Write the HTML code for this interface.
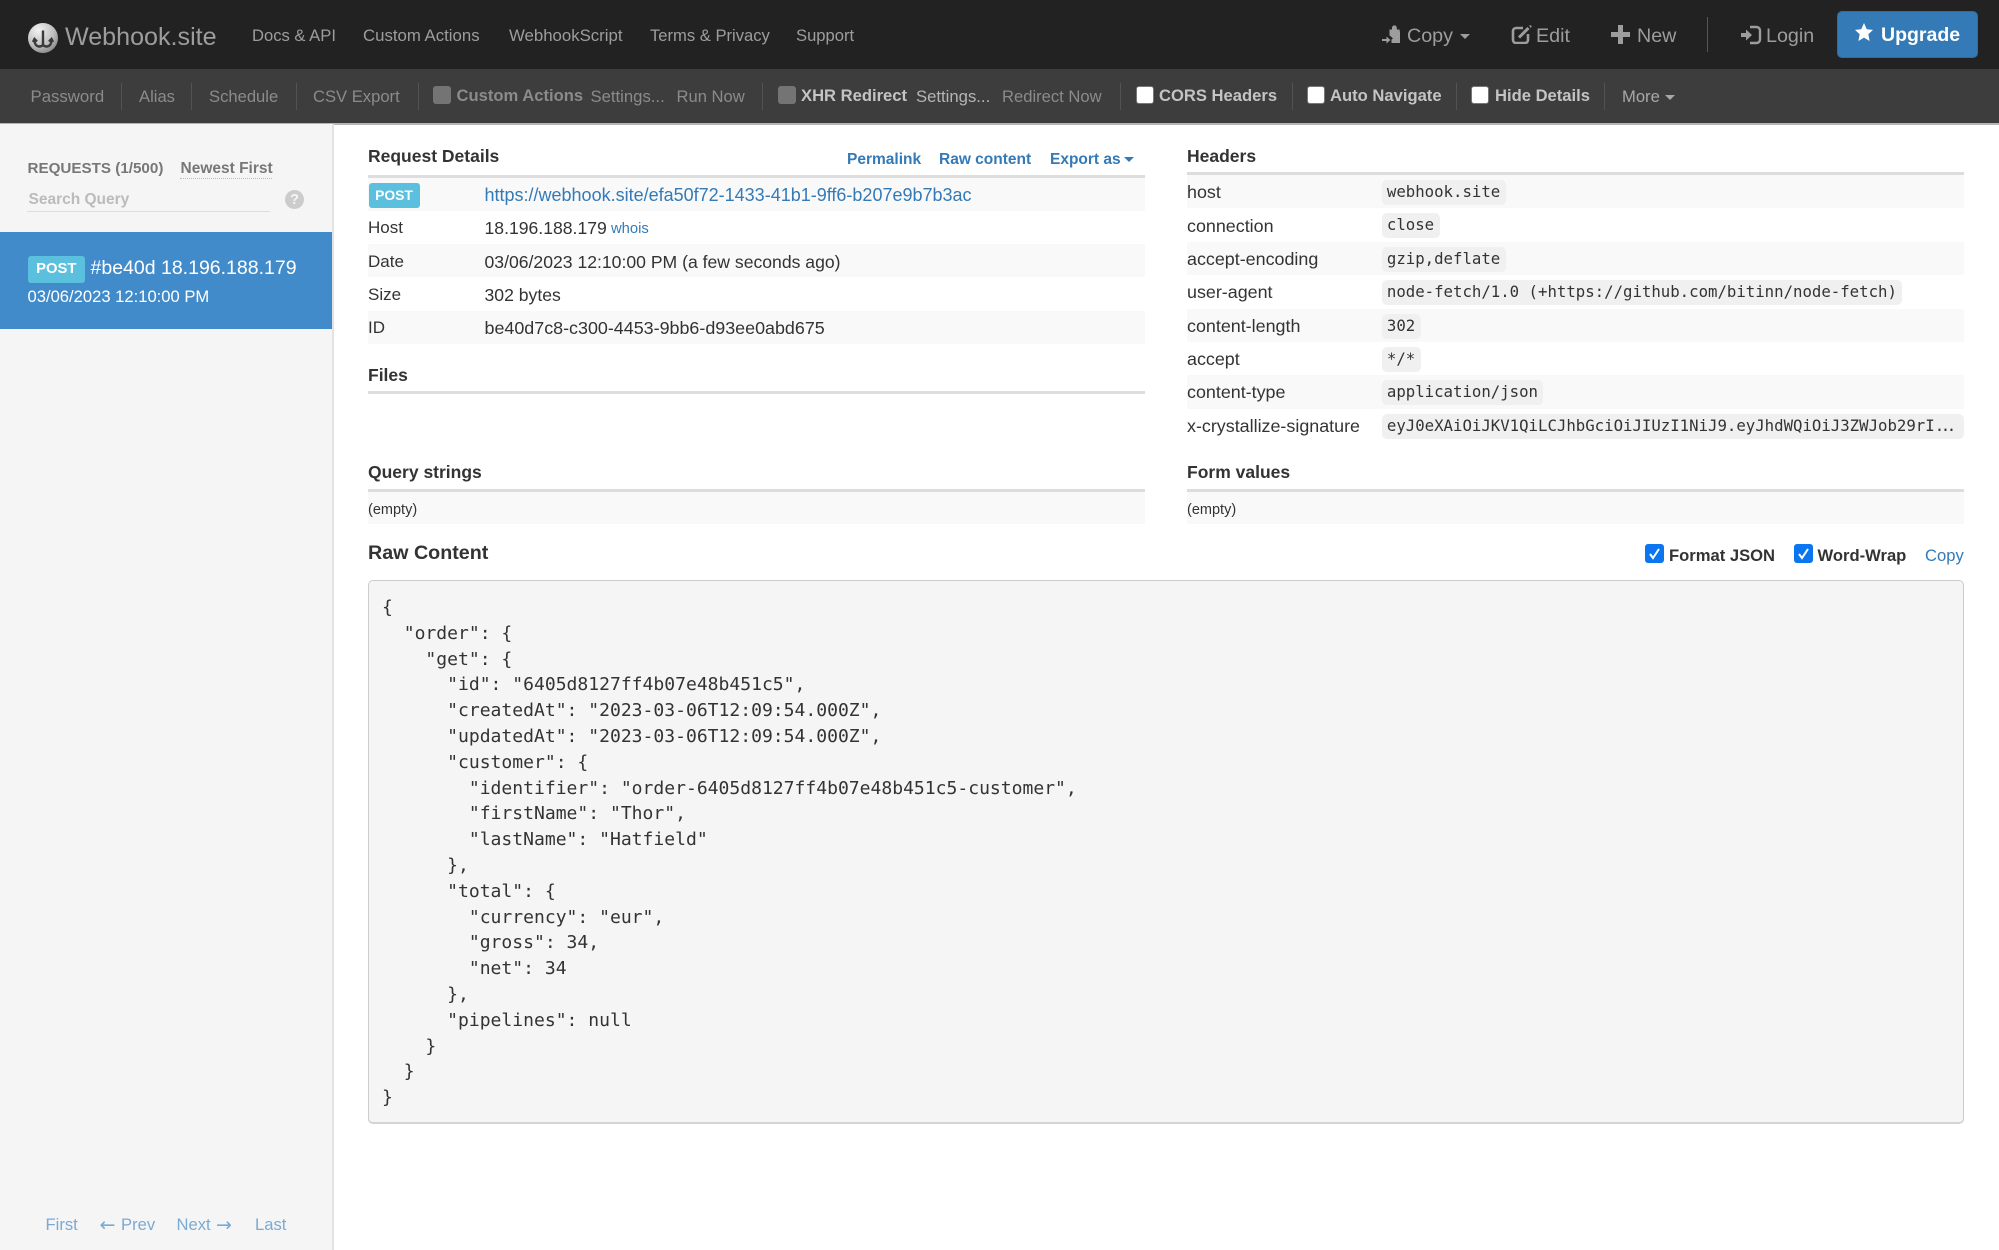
<!DOCTYPE html>
<html lang="en"><head><meta charset="utf-8"><title>Webhook.site</title>
<style>
html,body{margin:0;padding:0;background:#fff}
#p{position:relative;width:1999px;height:1250px;overflow:hidden;background:#fff;font-family:"Liberation Sans",Arial,sans-serif;font-size:16.6px;color:#333}
#p div,#p span.t,#p a,#p svg{position:absolute}
.t{white-space:nowrap;line-height:20px;height:20px}
a{text-decoration:none;color:#337ab7}
.b{font-weight:bold}
.n{color:#9d9d9d;font-size:16.8px}
.s{color:#8b8b8b}
.e{color:#c4c4c4;font-weight:bold}
.d{color:#8b8b8b;font-weight:bold}
.sep{width:1px;top:83px;height:27px;background:#535353}
.cb{width:18px;height:18px;top:86px;border-radius:3px}
.row{height:33.3px}
.rule{height:3px;background:#ddd}
.h{font-weight:bold;font-size:17.5px;color:#333}
.v{font-size:17.6px}
.k{font-size:17.9px}
.code{font-family:"DejaVu Sans Mono","Liberation Mono",monospace;font-size:15.7px;background:#f0f0f0;border-radius:5px;height:25px;line-height:24px;white-space:nowrap;padding:0 5.4px;color:#333;box-sizing:border-box}
.lab{background:#5bc0de;color:#fff;font-weight:bold;border-radius:3px;text-align:center;white-space:nowrap}
.caret{width:0;height:0;border-left:5px solid transparent;border-right:5px solid transparent;border-top:5px solid #9d9d9d}
.blue{width:19px;height:19px;background:#0b76ef;border-radius:3px;top:544px}
#raw{left:368px;top:580px;width:1596px;height:544px;box-sizing:border-box;background:#f5f5f5;border:1px solid #ccc;border-bottom:2px solid #d4d4d4;border-radius:5px}
pre{position:absolute;left:382px;top:595px;margin:0;font-family:"DejaVu Sans Mono","Liberation Mono",monospace;font-size:18.05px;line-height:25.8px;color:#333}
.pg{color:#7aaad4}
.ar{font-family:"DejaVu Sans",sans-serif;font-size:19px}
</style></head><body>
<div id="p">
<div style="left:0;top:0;width:1999px;height:69px;background:#222"></div>
<div style="left:0;top:69px;width:1999px;height:54px;background:#3d3d3d"></div>
<div style="left:0;top:123px;width:1999px;height:1.5px;background:#b5b5b5"></div>

<svg style="left:28px;top:23px" width="30" height="30" viewBox="0 0 30 30"><defs><radialGradient id="g" cx=".35" cy=".25" r=".95"><stop offset="0" stop-color="#f2f2f2"/><stop offset=".55" stop-color="#bdbdbd"/><stop offset="1" stop-color="#6d6d6d"/></radialGradient></defs><circle cx="15" cy="15" r="15" fill="url(#g)"/><path d="M15 7.5V22M6.5 17c0 4 2 6.5 5 6.5 2 0 3-1 3.5-1.5.5.5 1.5 1.500 3.500 1.500 3 0 5-2.500 5-6.500M5 19l1.500-3 2.500 2.500M25 19l-1.500-3-2.500 2.500" fill="none" stroke="#3a3a3a" stroke-width="2.400"/></svg>
<span class="t" style="left:65px;top:24.500px;font-size:25.100px;line-height:24px;height:24px;color:#9d9d9d">Webhook.site</span>
<a class="t n" style="left:252px;top:25.500px;font-size:16.600px">Docs &amp; API</a>
<a class="t n" style="left:363px;top:25.500px">Custom Actions</a>
<a class="t n" style="left:509px;top:25.500px">WebhookScript</a>
<a class="t n" style="left:650px;top:25.500px;font-size:16.600px">Terms &amp; Privacy</a>
<a class="t n" style="left:796px;top:25.500px;font-size:16.600px">Support</a>

<svg style="left:1382px;top:25px" width="20" height="21" viewBox="0 0 20 21" fill="#9d9d9d"><path d="M7.500 4.500H10V2.800a2.400 2.400 0 0 1 4.800 0V4.500h2.700l.5 3V18H9.500v-3.500l1.500-1-1.500-1.500-2-1.500z"/><path d="M0 14h4.500v-2.500l4 3.500-4 3.500V16H0z"/></svg>
<span class="t n" style="left:1407px;top:26px;font-size:19.700px">Copy</span>
<div class="caret" style="left:1460px;top:34px"></div>
<svg style="left:1511px;top:25px" width="21" height="19" viewBox="0 0 21 19" fill="none"><path d="M12 3H5a3 3 0 0 0-3 3v9a3 3 0 0 0 3 3h9a3 3 0 0 0 3-3V9" stroke="#9d9d9d" stroke-width="2.600"/><path d="M8 12.500L17.500 3" stroke="#9d9d9d" stroke-width="3"/><path d="M18 0l3 1-1.500 2z" fill="#9d9d9d"/></svg>
<span class="t n" style="left:1536px;top:26px;font-size:19.700px">Edit</span>
<svg style="left:1611px;top:25px" width="19" height="19" viewBox="0 0 19 19" fill="#9d9d9d"><path d="M7 0h5v7h7v5h-7v7H7v-7H0V7h7z"/></svg>
<span class="t n" style="left:1637px;top:26px;font-size:19.700px">New</span>
<div style="left:1707px;top:17px;width:1px;height:35px;background:#555"></div>
<svg style="left:1741px;top:25px" width="21" height="20" viewBox="0 0 21 20" fill="none"><path d="M0 8h5V4.500L11 10l-6 5.500V12H0z" fill="#9d9d9d"/><path d="M9 2h6.500a3.500 3.500 0 0 1 3.500 3.500v9a3.500 3.500 0 0 1-3.500 3.500H9" stroke="#9d9d9d" stroke-width="2.400"/></svg>
<span class="t n" style="left:1766px;top:26px;font-size:19.700px">Login</span>
<div style="left:1837px;top:11px;width:141px;height:47px;background:#337ab7;border-radius:5px;border:1px solid #2e6da4;box-sizing:border-box"></div>
<svg style="left:1855px;top:23px" width="18" height="18" viewBox="0 0 24 24" fill="#fff"><path d="M12 0l3.700 8.300 8.300.9-6.200 5.800 1.700 9L12 19.500 4.500 24l1.700-9L0 9.200l8.300-.9z"/></svg>
<span class="t b" style="left:1881px;top:25px;font-size:19.500px;color:#fff">Upgrade</span>

<a class="t s" style="left:30.500px;top:87px;font-size:16.800px">Password</a><div class="sep" style="left:121px"></div>
<a class="t s" style="left:139px;top:87px">Alias</a><div class="sep" style="left:191px"></div>
<a class="t s" style="left:209px;top:87px">Schedule</a><div class="sep" style="left:296px"></div>
<a class="t s" style="left:313px;top:87px">CSV Export</a><div class="sep" style="left:418px"></div>
<div class="cb" style="left:433px;background:#747474"></div>
<span class="t d" style="left:456.500px;top:85.500px">Custom Actions</span>
<a class="t s" style="left:590.500px;top:87px;font-size:16.700px">Settings...</a>
<a class="t s" style="left:676.500px;top:87px">Run Now</a><div class="sep" style="left:762px"></div>
<div class="cb" style="left:778px;background:#747474"></div>
<span class="t e" style="left:801px;top:85.500px">XHR Redirect</span>
<a class="t" style="left:916px;top:87px;color:#b5b5b5;font-size:16.700px">Settings...</a>
<a class="t s" style="left:1002px;top:87px">Redirect Now</a><div class="sep" style="left:1120px"></div>
<div class="cb" style="left:1135.500px;background:#fff;box-sizing:border-box;border:1px solid #777"></div>
<span class="t e" style="left:1159px;top:85.500px">CORS Headers</span><div class="sep" style="left:1292px"></div>
<div class="cb" style="left:1307px;background:#fff;box-sizing:border-box;border:1px solid #777"></div>
<span class="t e" style="left:1330px;top:85.500px">Auto Navigate</span><div class="sep" style="left:1456px"></div>
<div class="cb" style="left:1471px;background:#fff;box-sizing:border-box;border:1px solid #777"></div>
<span class="t e" style="left:1495px;top:85.500px">Hide Details</span><div class="sep" style="left:1604px"></div>
<a class="t" style="left:1622px;top:87px;color:#a8a8a8">More</a>
<div class="caret" style="left:1665px;top:95px;border-top-color:#a8a8a8"></div>

<div style="left:0;top:124px;width:332px;height:1126px;background:#f5f5f5"></div>
<div style="left:332px;top:124px;width:1.500px;height:1126px;background:#e2e2e2"></div>
<span class="t b" style="left:27.500px;top:158.500px;font-size:15.200px;color:#777">REQUESTS (1/500)</span>
<span class="t b" style="left:180.500px;top:159px;font-size:15.500px;color:#777;height:20px">Newest First</span>
<div style="left:180px;top:177.500px;width:92px;border-top:1px dotted #bbb;height:0"></div>
<span class="t b" style="left:28.500px;top:189.500px;font-size:15.500px;color:#bbb">Search Query</span>
<div style="left:27px;top:210.500px;width:243px;height:1px;background:#ddd"></div>
<div style="left:285px;top:190px;width:19px;height:19px;border-radius:50%;background:#ccc"></div>
<span class="t b" style="left:285px;top:189.500px;width:19px;text-align:center;font-size:14.500px;color:#f5f5f5">?</span>

<div style="left:0;top:231.500px;width:332px;height:97.500px;background:#428bca"></div>
<div class="lab" style="left:27.500px;top:256px;width:57.500px;height:27px;line-height:27px;font-size:14.800px">POST</div>
<span class="t" style="left:90.500px;top:258px;font-size:19.500px;color:#fff">#be40d 18.196.188.179</span>
<span class="t" style="left:27.500px;top:286.500px;color:#fff">03/06/2023 12:10:00 PM</span>

<span class="t h" style="left:368px;top:145.500px">Request Details</span>
<a class="t b" style="left:847px;top:149.500px;font-size:15.500px">Permalink</a>
<a class="t b" style="left:939px;top:149.500px;font-size:15.500px">Raw content</a>
<a class="t b" style="left:1050px;top:149.500px;font-size:15.500px">Export as</a>
<div class="caret" style="left:1124px;top:157px;border-top-color:#337ab7"></div>
<div class="rule" style="left:368px;top:174.500px;width:777px"></div>
<div class="row" style="left:368px;top:177.500px;width:777px;background:#f9f9f9"></div>
<div class="row" style="left:368px;top:244px;width:777px;background:#f9f9f9"></div>
<div class="row" style="left:368px;top:310.700px;width:777px;background:#f9f9f9"></div>
<div class="lab" style="left:368.500px;top:183px;width:51px;height:25px;line-height:25px;font-size:13.900px">POST</div>
<a class="t" style="left:484.500px;top:184.500px;font-size:18px">https://webhook.site/efa50f72-1433-41b1-9ff6-b207e9b7b3ac</a>
<span class="t" style="left:368px;top:218px;font-size:17px">Host</span>
<span class="t v" style="left:484.500px;top:218px">18.196.188.179</span>
<a class="t" style="left:611px;top:219px;font-size:14.800px">whois</a>
<span class="t" style="left:368px;top:251.500px;font-size:17px">Date</span>
<span class="t v" style="left:484.500px;top:251.500px">03/06/2023 12:10:00 PM (a few seconds ago)</span>
<span class="t" style="left:368px;top:285px;font-size:17px">Size</span>
<span class="t v" style="left:484.500px;top:285px">302 bytes</span>
<span class="t" style="left:368px;top:318px;font-size:17px">ID</span>
<span class="t" style="left:484.500px;top:318px;font-size:17.900px">be40d7c8-c300-4453-9bb6-d93ee0abd675</span>

<span class="t h" style="left:368px;top:365px">Files</span>
<div class="rule" style="left:368px;top:391px;width:777px"></div>
<span class="t h" style="left:368px;top:461.500px">Query strings</span>
<div class="rule" style="left:368px;top:489px;width:777px"></div>
<div style="left:368px;top:492px;width:777px;height:32px;background:#f9f9f9"></div>
<span class="t" style="left:368px;top:499.500px;font-size:14.500px">(empty)</span>

<span class="t h" style="left:1187px;top:145.500px">Headers</span>
<div class="rule" style="left:1187px;top:172px;width:777px"></div>
<div class="row" style="left:1187px;top:175px;width:777px;background:#f9f9f9"></div>
<div class="row" style="left:1187px;top:241.800px;width:777px;background:#f9f9f9"></div>
<div class="row" style="left:1187px;top:308.600px;width:777px;background:#f9f9f9"></div>
<div class="row" style="left:1187px;top:375.400px;width:777px;background:#f9f9f9"></div>

<span class="t k" style="left:1187px;top:182px">host</span><div class="code" style="left:1381.500px;top:180px">webhook.site</div>
<span class="t k" style="left:1187px;top:215.500px">connection</span><div class="code" style="left:1381.500px;top:213.400px">close</div>
<span class="t k" style="left:1187px;top:248.500px">accept-encoding</span><div class="code" style="left:1381.500px;top:246.800px">gzip,deflate</div>
<span class="t k" style="left:1187px;top:282px">user-agent</span><div class="code" style="left:1381.500px;top:280.200px">node-fetch/1.0 (+https://github.com/bitinn/node-fetch)</div>
<span class="t k" style="left:1187px;top:315.500px">content-length</span><div class="code" style="left:1381.500px;top:313.600px">302</div>
<span class="t k" style="left:1187px;top:349px">accept</span><div class="code" style="left:1381.500px;top:347px">*/*</div>
<span class="t k" style="left:1187px;top:382px">content-type</span><div class="code" style="left:1381.500px;top:380.400px">application/json</div>
<span class="t k" style="left:1187px;top:415.500px">x-crystallize-signature</span><div class="code" style="left:1381.500px;top:413.800px;width:582.500px">eyJ0eXAiOiJKV1QiLCJhbGciOiJIUzI1NiJ9.eyJhdWQiOiJ3ZWJob29rI<span style="letter-spacing:-3.400px">...</span></div>

<span class="t h" style="left:1187px;top:461.500px">Form values</span>
<div class="rule" style="left:1187px;top:489px;width:777px"></div>
<div style="left:1187px;top:492px;width:777px;height:32px;background:#f9f9f9"></div>
<span class="t" style="left:1187px;top:499.500px;font-size:14.500px">(empty)</span>

<span class="t b" style="left:368px;top:542.500px;font-size:19.700px;color:#333">Raw Content</span>
<div class="blue" style="left:1645px"></div>
<svg style="left:1645px;top:544px" width="19" height="19" viewBox="0 0 19 19"><path d="M5 10l3 4 6-9" fill="none" stroke="#fff" stroke-width="2"/></svg>
<span class="t b" style="left:1669px;top:545.500px">Format JSON</span>
<div class="blue" style="left:1793.500px"></div>
<svg style="left:1793.500px;top:544px" width="19" height="19" viewBox="0 0 19 19"><path d="M5 10l3 4 6-9" fill="none" stroke="#fff" stroke-width="2"/></svg>
<span class="t b" style="left:1817.500px;top:545.500px">Word-Wrap</span>
<a class="t" style="left:1925px;top:545.500px">Copy</a>

<div id="raw"></div>
<pre>{
  "order": {
    "get": {
      "id": "6405d8127ff4b07e48b451c5",
      "createdAt": "2023-03-06T12:09:54.000Z",
      "updatedAt": "2023-03-06T12:09:54.000Z",
      "customer": {
        "identifier": "order-6405d8127ff4b07e48b451c5-customer",
        "firstName": "Thor",
        "lastName": "Hatfield"
      },
      "total": {
        "currency": "eur",
        "gross": 34,
        "net": 34
      },
      "pipelines": null
    }
  }
}</pre>

<a class="t pg" style="left:45.500px;top:1215px">First</a>
<span class="t pg ar" style="left:99.500px;top:1215px">←</span>
<a class="t pg" style="left:121px;top:1215px">Prev</a>
<a class="t pg" style="left:176.500px;top:1215px">Next</a>
<span class="t pg ar" style="left:216px;top:1215px">→</span>
<a class="t pg" style="left:255px;top:1215px">Last</a>
</div>
</body></html>
